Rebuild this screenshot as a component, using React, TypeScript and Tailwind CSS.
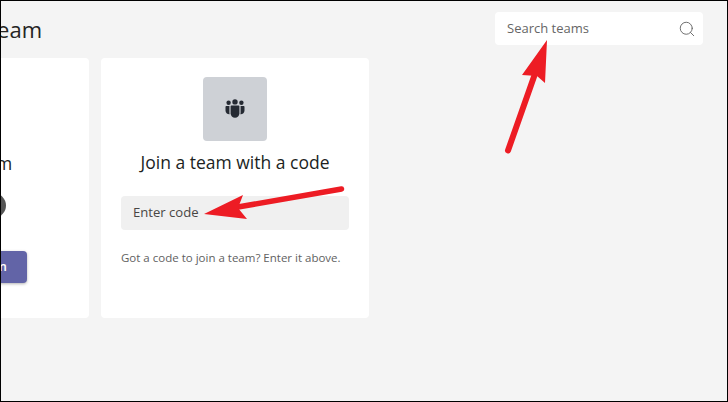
import { Search } from "lucide-react";

function TeamsIcon() {
  return (
    <svg width="20" height="20" viewBox="0 0 20 20" fill="#252a33">
      <circle cx="10" cy="2.9" r="2.7" />
      <circle cx="3.6" cy="3.8" r="2.2" />
      <circle cx="16.4" cy="3.8" r="2.2" />
      <path d="M5.6 7.6c0-.6.5-1 1-1h6.800c.5 0 1 .4 1 1v6.600c0 2.600-2 4.600-4.400 4.600s-4.400-2-4.400-4.600z" />
      <path d="M4.500 7c-.1.200-.1.400-.1.600v6c0 .6.100 1.200.3 1.700-2.400.2-4.200-1.600-4.200-3.900V8c0-.6.400-1 1-1z" />
      <path d="M15.500 7c.1.200.1.400.1.600v6c0 .6-.1 1.200-.3 1.700 2.400.2 4.200-1.600 4.200-3.900V8c0-.6-.4-1-1-1z" />
    </svg>
  );
}

function Arrows() {
  return (
    <svg className="absolute left-0 top-0 pointer-events-none" width="728" height="402" fill="#ed1c24">
      <path d="M340.500 188L237 206" stroke="#ed1c24" strokeWidth="5.500" strokeLinecap="round" />
      <polygon points="203,213 242,194 237,207 246,218" />
      <path d="M507 149.500L535 70" stroke="#ed1c24" strokeWidth="6" strokeLinecap="round" />
      <polygon points="546,39 521,74 536,75 544,82" />
    </svg>
  );
}

export default function App() {
  return (
    <div className="relative w-[728px] h-[402px] overflow-hidden border border-black bg-[#f4f4f4] font-['Open_Sans','Noto_Sans',sans-serif] text-[#252423]">
      <div className="flex items-center justify-between h-[57px] pr-6">
        <h1 className="-ml-[190px] w-[231px] text-right text-[22px] font-normal whitespace-nowrap">Join or create a team</h1>
        <div className="flex items-center justify-between w-[208px] h-[33px] -mt-[2px] pl-3 pr-[7px] rounded bg-white">
          <span className="text-[13px] text-[#666]">Search teams</span>
          <Search size={18} strokeWidth={1.2} className="text-[#616161]" />
        </div>
      </div>
      <div className="flex gap-3 -ml-[180px]">
        <div className="flex flex-col items-center w-[268px] h-[260px] shrink-0 rounded bg-white pt-[93px]">
          <h2 className="text-[17.500px] leading-6 font-medium text-[#201f1e]">Create a team</h2>
          <div className="flex mt-[18px]">
            <div className="w-[25.500px] h-[25px] rounded-full bg-[#555]" />
            <div className="w-[25.500px] h-[25px] rounded-full bg-[#555]" />
            <div className="w-[25.500px] h-[25px] rounded-full bg-[#555]" />
            <div className="w-[25.500px] h-[25px] rounded-full bg-[#555]" />
          </div>
          <button className="flex items-center justify-end mt-[33px] w-[144px] h-[32px] pr-5 rounded bg-[#6264a7] text-white text-[13px] font-semibold shadow-[0_1px_3px_rgba(0,0,0,0.3)]">Create team</button>
        </div>
        <div className="flex flex-col items-center w-[268px] h-[260px] shrink-0 rounded bg-white pt-[19px]">
          <div className="flex items-center justify-center w-16 h-16 rounded bg-[#ced1d6]">
            <TeamsIcon />
          </div>
          <h2 className="mt-[9px] text-[17.500px] leading-6 font-medium text-[#201f1e]">Join a team with a code</h2>
          <div className="flex items-center w-[228px] h-[34px] mt-[22px] px-3 rounded bg-[#f0f0f0] text-[13.100px] text-[#484644]">Enter code</div>
          <p className="w-[228px] mt-5 text-[11.500px] leading-4 text-[#616161] whitespace-nowrap">Got a code to join a team? Enter it above.</p>
        </div>
      </div>
      <Arrows />
    </div>
  );
}
